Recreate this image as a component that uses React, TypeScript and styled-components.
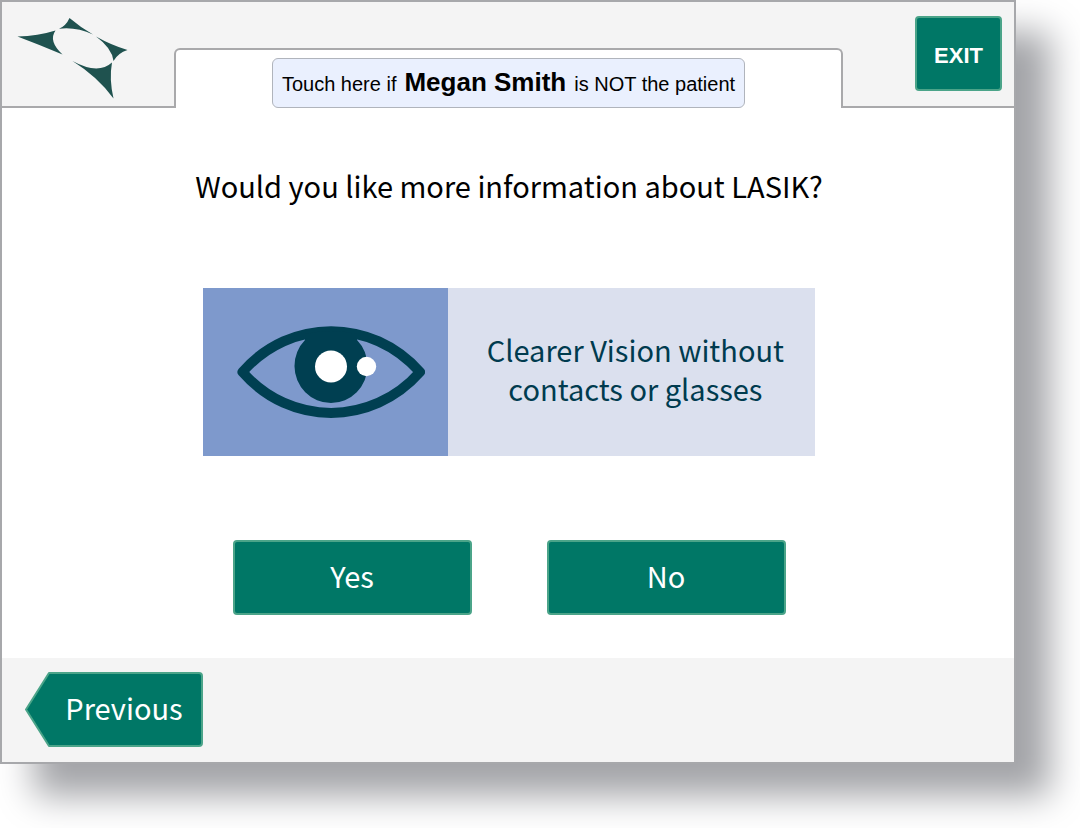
import React from "react";
import styled, { createGlobalStyle } from "styled-components";

const humanist = `"Noto Sans CJK SC", "Noto Sans", sans-serif`;
const grotesque = `"Liberation Sans", Arial, sans-serif`;

const GlobalStyle = createGlobalStyle`
  * { box-sizing: border-box; }
  body { margin: 0; background: #fff; font-family: ${humanist}; }
`;

const Page = styled.div`
  padding: 0 64px 64px 0;
`;

const Screen = styled.div`
  display: flex;
  flex-direction: column;
  min-height: calc(100vh - 64px);
  border: 2px solid #a7a8ab;
  background: #fff;
  box-shadow: 34px 32px 34px #a3a4a8;
`;

const Header = styled.header`
  display: grid;
  grid-template-columns: 172px minmax(0, 1fr) 171px;
  height: 106px;
  background: #f4f4f4;
`;

const HeaderSide = styled.div<{ $align: "start" | "end" }>`
  display: flex;
  align-items: flex-start;
  justify-content: flex-${(p) => p.$align};
  padding: 14px 12px 0 14px;
  border-bottom: 2px solid #a9a9ab;
`;

const Logo = styled.svg`
  display: block;
  width: 114px;
  height: 86px;
`;

const Tab = styled.div`
  display: flex;
  align-items: flex-end;
  justify-content: center;
  margin-top: 46px;
  border: 2px solid #a9a9ab;
  border-bottom: 0;
  border-radius: 6px 6px 0 0;
  background: #fff;
`;

const PatientButton = styled.button`
  display: flex;
  align-items: baseline;
  justify-content: center;
  gap: 8px;
  height: 50px;
  padding: 0 9px 3px;
  border: 1px solid #b0b4bc;
  border-radius: 6px;
  background: #eaf0fe;
  color: #000;
  font: 20px/46px ${grotesque};
  white-space: nowrap;
`;

const PatientName = styled.strong`
  font-size: 26px;
`;

const ActionButton = styled.button<{ $width: number }>`
  width: ${(p) => p.$width}px;
  height: 75px;
  padding: 0 0 5px;
  border: 2px solid #4ba489;
  border-radius: 4px;
  background: #007766;
  color: #fff;
  font: 29px/40px ${humanist};
`;

const ExitButton = styled(ActionButton)`
  padding: 4px 0 0;
  font: bold 22px/32px ${grotesque};
`;

const Main = styled.main`
  display: flex;
  flex: 1;
  flex-direction: column;
  align-items: center;
  padding: 57px 24px 42px 26px;
`;

const Question = styled.h1`
  margin: 0;
  color: #000;
  font-size: 29px;
  font-weight: 400;
  line-height: 40px;
`;

const Banner = styled.section`
  display: grid;
  grid-template-columns: 2fr 3fr;
  width: 100%;
  max-width: 612px;
  min-height: 168px;
  margin-top: 83px;
  background: #dbe0ee;
`;

const BannerPicture = styled.div`
  display: flex;
  align-items: center;
  justify-content: center;
  padding-left: 12px;
  background: #7e99cc;
`;

const Eye = styled.svg`
  display: block;
  width: 188px;
  height: 92px;
`;

const BannerText = styled.p`
  display: flex;
  flex-direction: column;
  align-items: center;
  justify-content: center;
  margin: 0;
  padding: 0 0 6px 8px;
  color: #003b4f;
  font-size: 29px;
  line-height: 39px;
  text-align: center;
`;

const Answers = styled.div`
  display: flex;
  gap: 75px;
  margin-top: 84px;
`;

const Footer = styled.footer`
  display: flex;
  padding: 14px 23px 15px;
  background: #f4f4f4;
`;

const PreviousButton = styled.button`
  position: relative;
  width: 178px;
  height: 75px;
  padding: 0 0 5px 20px;
  border: 0;
  background: none;
  color: #fff;
  font: 29px/40px ${humanist};
`;

const ArrowShape = styled.svg`
  position: absolute;
  inset: 0;
  width: 100%;
  height: 100%;
`;

const ArrowLabel = styled.span`
  position: relative;
`;

export default function App() {
  return (
    <Page>
      <GlobalStyle />
      <Screen>
        <Header>
          <HeaderSide $align="start">
            <Logo viewBox="16 16 114 86" role="img" aria-label="Company logo">
              <g fill="#1f524f">
                <path d="M17.500 36.500Q38 36 55.500 30.500Q48 41 62.500 54.500Q40 45 17.500 36.500Z" />
                <path d="M59 28.700Q66 26 69.500 18Q80 27 93 34.500Q76 26.500 59 28.700Z" />
                <path d="M96 36.500Q111 45 127.500 50Q118 53 113.500 61Q112 48 96 36.500Z" />
                <path d="M72.500 61Q98 75 112 62.500Q109 79 113.500 98.500Q98 77 72.500 61Z" />
              </g>
            </Logo>
          </HeaderSide>
          <Tab>
            <PatientButton type="button">
              <span>Touch here if</span>
              <PatientName>Megan Smith</PatientName>
              <span>is NOT the patient</span>
            </PatientButton>
          </Tab>
          <HeaderSide $align="end">
            <ExitButton type="button" $width={87}>EXIT</ExitButton>
          </HeaderSide>
        </Header>
        <Main>
          <Question>Would you like more information about LASIK?</Question>
          <Banner>
            <BannerPicture>
              <Eye viewBox="237 326 188 92" aria-hidden="true">
                <path
                  d="M242.500 372C290 317.500 372 317.500 420 372C372 426.500 290 426.500 242.500 372Z"
                  fill="none"
                  stroke="#003f51"
                  strokeWidth="10"
                  strokeLinejoin="round"
                />
                <path
                  d="M305 340A36.500 37 0 1 0 357 340L357 334Q331 328 305 334Z"
                  fill="#003f51"
                />
                <circle cx="331" cy="366.500" r="16" fill="#fff" />
                <circle cx="366.500" cy="366.500" r="9.700" fill="#fff" />
              </Eye>
            </BannerPicture>
            <BannerText>
              <span>Clearer Vision without</span>
              <span>contacts or glasses</span>
            </BannerText>
          </Banner>
          <Answers>
            <ActionButton type="button" $width={239}>Yes</ActionButton>
            <ActionButton type="button" $width={239}>No</ActionButton>
          </Answers>
        </Main>
        <Footer>
          <PreviousButton type="button">
            <ArrowShape viewBox="0 0 178 75" aria-hidden="true">
              <path
                d="M24 1H174Q177 1 177 4V71Q177 74 174 74H24L1 37.500Z"
                fill="#007766"
                stroke="#4ba489"
                strokeWidth="2"
                strokeLinejoin="round"
              />
            </ArrowShape>
            <ArrowLabel>Previous</ArrowLabel>
          </PreviousButton>
        </Footer>
      </Screen>
    </Page>
  );
}
